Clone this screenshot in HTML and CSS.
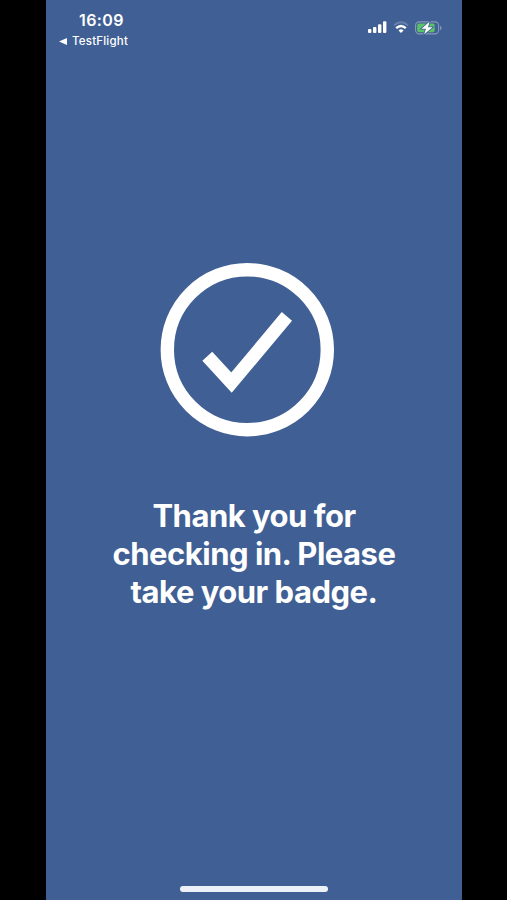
FILE: index.html
```
<!DOCTYPE html>
<html lang="en">
<head>
  <meta charset="UTF-8">
  <meta name="viewport" content="width=device-width, initial-scale=1.0">
  <title>Check in</title>
  <link rel="stylesheet" href="styles.css">
</head>
<body>
  <div class="phone">
    <header class="status-bar">
      <div class="status-left">
        <div class="time">16:09</div>
        <div class="back-app">
          <svg width="8" height="7" viewBox="0 0 8 7"><path d="M0 3.5L8 0v7z" fill="#fff"/></svg>
          <span>TestFlight</span>
        </div>
      </div>
      <div class="status-icons">
        <!-- signal -->
        <svg width="19" height="12" viewBox="0 0 19 12" fill="#fff">
          <rect x="0" y="8" width="3.4" height="4" rx="1"/>
          <rect x="5" y="6" width="3.4" height="6" rx="1"/>
          <rect x="10" y="3.3" width="3.4" height="8.7" rx="1"/>
          <rect x="15" y="0.3" width="3.4" height="11.7" rx="1"/>
        </svg>
        <!-- wifi -->
        <svg class="wifi" width="16" height="12" viewBox="0 0 16 12" fill="none" stroke-width="2.4">
          <path d="M1 4.2Q8 -1.8 15 4.2" stroke="#6881ac" stroke-width="1.8"/>
          <path d="M3.2 7.1Q8 2.8 12.8 7.1" stroke="#fff"/>
          <path d="M8 12L5.5 9.4Q8 7.3 10.5 9.4z" fill="#fff"/>
        </svg>
        <!-- battery -->
        <svg class="battery" width="27" height="14" viewBox="0 0 27 14">
          <rect x="0.6" y="0.9" width="23" height="12" rx="3.6" fill="none" stroke="#8699b9" stroke-width="1.1"/>
          <path d="M25 4.8v4.4q1.6-.7 1.6-2.2T25 4.8z" fill="#8699b9"/>
          <rect x="2.2" y="2.5" width="17.5" height="8.8" rx="2" fill="#5cc267"/>
          <path d="M14.5 0.8L6.5 7.8h4.5L9.2 13.2L17.5 6.2H13z" fill="#fff" stroke="#405f94" stroke-width="1.6" paint-order="stroke"/>
        </svg>
      </div>
    </header>

    <main class="content">
      <svg class="check" width="174" height="174" viewBox="0 0 174 174">
        <circle cx="87.3" cy="86.7" r="80" fill="none" stroke="#fff" stroke-width="13.4"/>
        <path d="M47.3 93.2L71.5 119.6L126.9 53.4" fill="none" stroke="#fff" stroke-width="13.4"/>
      </svg>
      <h1 class="message">Thank you for<br>checking in. Please<br>take your badge.</h1>
    </main>

    <div class="home-indicator"></div>
  </div>
</body>
</html>
```

FILE: styles.css
```
body {
  margin: 0;
  background-color: #000;
  color: #fff;
  font-family: Inter, "Liberation Sans", sans-serif;
}

.phone {
  display: flex;
  flex-direction: column;
  box-sizing: border-box;
  width: 416px;
  height: 900px;
  margin-left: 46px;
  background-color: #405f94;
}

.status-bar {
  display: flex;
  justify-content: space-between;
  height: 60px;
  padding: 0 20px 0 13px;
}

.time {
  margin: 10px 0 0 20px;
  font-size: 16px;
  font-weight: 600;
  line-height: 20px;
  letter-spacing: 0.4px;
}

.back-app {
  display: flex;
  align-items: center;
  gap: 5px;
  margin-top: 3px;
  font-size: 11.5px;
  font-weight: 500;
  line-height: 16px;
  letter-spacing: 0.2px;
}

.status-icons {
  display: flex;
  align-items: flex-start;
  padding-top: 21px;
}

.wifi {
  margin-left: 6px;
}

.battery {
  margin-left: 6px;
}

.content {
  display: flex;
  flex: 1;
  flex-direction: column;
  align-items: center;
}

.check {
  margin: 203px 14px 0 0;
}

.message {
  margin: 60px 0 0;
  font-size: 31px;
  font-weight: 700;
  line-height: 38px;
  letter-spacing: -0.5px;
  text-align: center;
}

.home-indicator {
  width: 148px;
  height: 6px;
  margin: 0 auto 8px;
  border-radius: 3px;
  background-color: #edf2f8;
}
```
